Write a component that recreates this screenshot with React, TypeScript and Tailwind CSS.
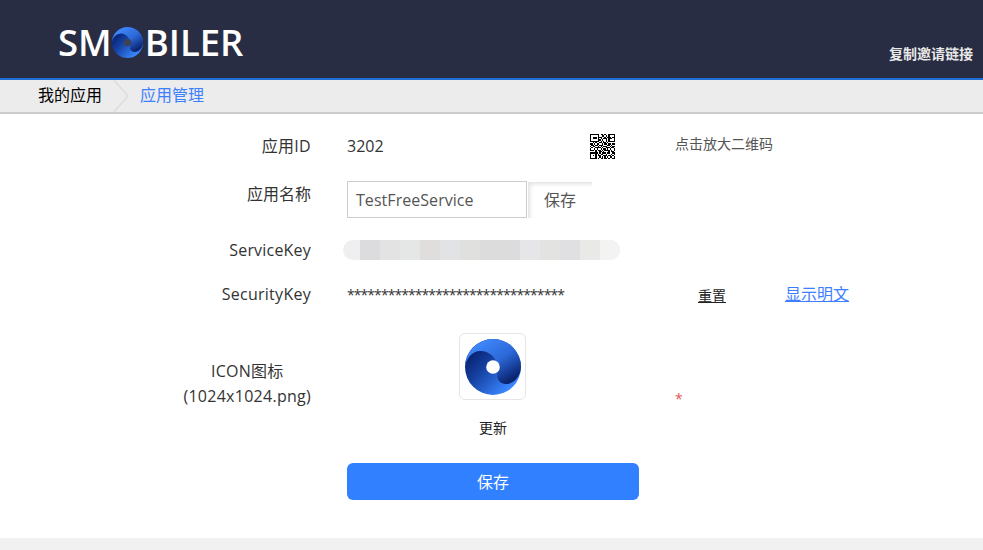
import React from "react";

const font = "font-['Open_Sans','Noto_Sans_CJK_SC',sans-serif]";

const qrRows = [
  "1111111011010011111",
  "1000001001101010001",
  "1011101110010111011",
  "1011101010111011101",
  "1000001101001010001",
  "1111111010101011111",
  "0010100110110100000",
  "1101011001011011011",
  "0110110111000110100",
  "1011001010111001011",
  "0100111101001110110",
  "1001010010110101001",
  "1110101101011110101",
  "0000100110100010110",
  "1111110101110110011",
  "1000101011001000101",
  "1010101100111011010",
  "1000100101010101101",
  "1111101011011010011",
];

const blurCells = ["#dcdcde", "#e3e3e3", "#e5e6e6", "#e0dddd", "#e2e3e5", "#e0e0de", "#dddcdc", "#dcdcdc", "#e6e6e8", "#e3e3e1", "#e0e0e3", "#e9e9e8"];

const QrCode = () => (
  <svg width="25" height="25" viewBox="0 0 19 19" shapeRendering="crispEdges" className="mt-[2px]">
    {qrRows.map((row, y) =>
      row.split("").map((c, x) => (c === "1" ? <rect key={`${x}-${y}`} x={x} y={y} width="1" height="1" fill="#000" /> : null))
    )}
  </svg>
);

// swirl mark shared by the logo and the app icon
const Swirl = ({ size, id, hole }: { size: number; id: string; hole: string }) => (
  <svg width={size} height={size} viewBox="0 0 56 56">
    <defs>
      <linearGradient id={`${id}a`} x1="0" y1="0.3" x2="0.7" y2="0.95">
        <stop offset="0" stopColor="#081d6c" />
        <stop offset="0.4" stopColor="#14409f" />
        <stop offset="1" stopColor="#3a85ff" />
      </linearGradient>
      <linearGradient id={`${id}b`} x1="0.35" y1="0.05" x2="0.95" y2="0.8">
        <stop offset="0" stopColor="#3d85f8" />
        <stop offset="0.5" stopColor="#2c68d8" />
        <stop offset="1" stopColor="#0a2470" />
      </linearGradient>
    </defs>
    <circle cx="28" cy="28" r="28" fill={`url(#${id}a)`} />
    <path d="M0 28A28 28 0 0 1 56 28C55.5 38 48 46 40 45C33 44 31 38 33 33L31 22C28 16 22 11.5 15 12C7 12 1 20 0 28Z" fill={`url(#${id}b)`} />
    <circle cx="28" cy="28" r="6.8" fill={hole} />
  </svg>
);

export default function App() {
  return (
    <div className={`${font} w-[983px] h-[550px] bg-[#f1f1f1] overflow-hidden text-[#333]`}>
      <header className="h-[80px] bg-[#282d43] border-b-2 border-[#1f6fd6] flex justify-between">
        <div className="flex items-center pl-[58px] pt-[7px] text-white text-[36.5px] leading-none font-semibold">
          <span>SM</span>
          <Swirl size={31} id="logo" hole="#3c4258" />
          <span className="ml-[2px]">BILER</span>
        </div>
        <div className="pt-[44px] pr-[10px] text-[14px] leading-[20px] font-semibold text-[#e8e8e8]">复制邀请链接</div>
      </header>

      <nav className="h-[34px] bg-[#ececec] border-b-2 border-[#cccccc] flex items-center text-[16px] pb-[2px]">
        <span className="pl-[38px] text-black">我的应用</span>
        <svg width="20" height="32" viewBox="0 0 20 32" className="ml-[9px] mt-[2px]">
          <path d="M3 0L17 16L3 32" fill="none" stroke="#dcdcdc" strokeWidth="1.5" />
        </svg>
        <span className="ml-[9px] text-[#3d80ff]">应用管理</span>
      </nav>

      <main className="h-[424px] bg-white text-[16px]">
        <div className="flex items-center h-[67px] pb-[4px]">
          <div className="w-[311px] text-right tracking-[0.3px]">应用ID</div>
          <div className="ml-[36px] w-[243px]">3202</div>
          <QrCode />
          <div className="ml-[60px] text-[14px] text-[#555] pb-[4px]">点击放大二维码</div>
        </div>

        <div className="flex h-[37px]">
          <div className="w-[311px] text-right pt-[1px]">应用名称</div>
          <div className="ml-[36px] w-[180px] h-[37px] border border-[#ccc] pl-[8px] leading-[36px] text-[#555] tracking-[0.05px]">TestFreeService</div>
          <div className="ml-[1px] w-[64px] h-[36px] mt-[1px] text-center leading-[36px] text-[#555] bg-white shadow-[inset_3px_3px_4px_-1px_rgba(0,0,0,0.12)]">保存</div>
        </div>

        <div className="flex items-center h-[20px] mt-[22px]">
          <div className="w-[311px] text-right tracking-[0.2px]">ServiceKey</div>
          <div className="ml-[32px] w-[277px] h-[20px] rounded-[10px] bg-[#efefef] overflow-hidden flex pl-[17px]">
            {blurCells.map((c) => (
              <div key={c} className="w-[20px] h-full" style={{ backgroundColor: c }} />
            ))}
            <div className="w-[20px] h-full bg-[#f3f3f3]" />
          </div>
        </div>

        <div className="flex items-center h-[24px] mt-[22px]">
          <div className="w-[311px] text-right tracking-[0.27px]">SecurityKey</div>
          <div className="ml-[36px] w-[351px] text-[14px] tracking-[-0.93px]">********************************</div>
          <div className="text-[14px] underline text-[#222] pt-[2px]">重置</div>
          <div className="ml-[59px] text-[#3d80ff] underline">显示明文</div>
        </div>

        <div className="flex mt-[27px]">
          <div className="w-[311px] flex justify-end pt-[26px] leading-[25px]">
            <div className="text-center tracking-[0.27px]">
              <div>ICON图标</div>
              <div>(1024x1024.png)</div>
            </div>
          </div>
          <div className="ml-[148px] w-[67px] h-[67px] border border-[#e5e5e5] rounded-[6px] bg-white flex items-center justify-center">
            <Swirl size={56} id="icon" hole="#fff" />
          </div>
          <div className="ml-[149px] pt-[55px] text-[14px] text-[#e0584f]">*</div>
        </div>

        <div className="ml-[479px] mt-[9px] text-[14px] leading-[20px] text-[#222]">更新</div>

        <button className="block ml-[347px] mt-[25px] w-[292px] h-[37px] rounded-[6px] bg-[#3080ff] text-white text-[16px]">保存</button>
      </main>
    </div>
  );
}
